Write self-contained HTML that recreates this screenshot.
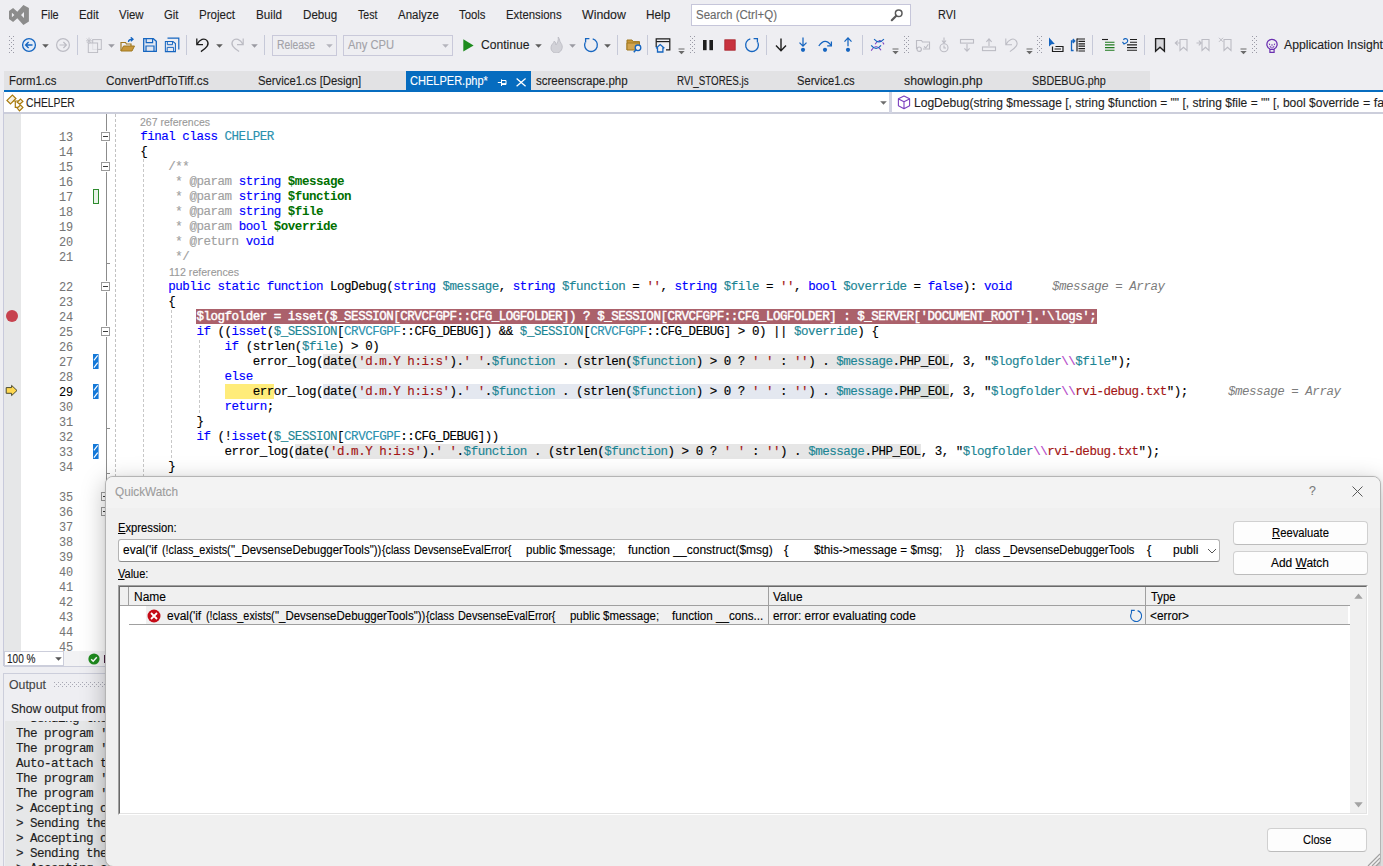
<!DOCTYPE html>
<html><head><meta charset="utf-8"><title>RVI</title>
<style>
html,body{margin:0;padding:0}
body{width:1383px;height:866px;overflow:hidden;background:#eeeef2;position:relative;font-family:"Liberation Sans",sans-serif;font-size:12px;color:#1e1e1e}
div,svg{position:absolute;box-sizing:border-box}
.t{white-space:pre;font-family:"Liberation Sans",sans-serif;transform-origin:0 50%;-webkit-text-stroke:0.12px}
.m{white-space:pre;font-family:"Liberation Mono",monospace;font-size:12.5px;letter-spacing:-0.471px;line-height:15px;height:15px;color:#000;-webkit-text-stroke:0.15px;margin-top:1px}
.o{white-space:pre;font-family:"Liberation Mono",monospace;font-size:12.6px;letter-spacing:-0.56px;line-height:15px;height:15px;color:#1e1e1e;-webkit-text-stroke:0.15px}
.k{color:#0000ff}.c{color:#2b91af}.v{color:#1b8594}.s{color:#a31515}.g{color:#a0a0a0}.dv{color:#007000;font-weight:bold;-webkit-text-stroke:0}.e{color:#b545c8}
.hl{background:#e6e6e6}.hb{background:#e4e8f0}.hp{background:#d9dfdc}
.ln{white-space:pre;font-family:"Liberation Mono",monospace;font-size:11.9px;letter-spacing:-0.11px;line-height:15px;height:15px;color:#787878;width:28px;text-align:right;-webkit-text-stroke:0.05px;margin-top:2px}
</style></head><body>

<svg style="left:9px;top:5px;" width="20" height="20" viewBox="0 0 20 20"><path d="M14.4 0 L19.9 3.1 V16.6 L14.4 19.9 L8.3 13.2 L4.1 16.9 L0 14 V5.9 L4.1 3.1 L8.3 6.8 Z M12 9.95 L15 7.1 V12.9 Z M2.9 7.7 V12.2 L5.4 9.95 Z" fill="#8c8c8c" fill-rule="evenodd"/></svg>
<div class="t" style="left:40.8px;top:6.54px;font-size:12.3px;line-height:16px;color:#1e1e1e;transform:scaleX(0.8930);">File</div>
<div class="t" style="left:78.8px;top:6.54px;font-size:12.3px;line-height:16px;color:#1e1e1e;transform:scaleX(0.9294);">Edit</div>
<div class="t" style="left:118.9px;top:6.54px;font-size:12.3px;line-height:16px;color:#1e1e1e;transform:scaleX(0.9304);">View</div>
<div class="t" style="left:163.9px;top:6.54px;font-size:12.3px;line-height:16px;color:#1e1e1e;transform:scaleX(0.9162);">Git</div>
<div class="t" style="left:199.1px;top:6.54px;font-size:12.3px;line-height:16px;color:#1e1e1e;transform:scaleX(0.9430);">Project</div>
<div class="t" style="left:256.0px;top:6.54px;font-size:12.3px;line-height:16px;color:#1e1e1e;transform:scaleX(0.9506);">Build</div>
<div class="t" style="left:302.9px;top:6.54px;font-size:12.3px;line-height:16px;color:#1e1e1e;transform:scaleX(0.9435);">Debug</div>
<div class="t" style="left:358.1px;top:6.54px;font-size:12.3px;line-height:16px;color:#1e1e1e;transform:scaleX(0.8600);">Test</div>
<div class="t" style="left:397.8px;top:6.54px;font-size:12.3px;line-height:16px;color:#1e1e1e;transform:scaleX(0.9324);">Analyze</div>
<div class="t" style="left:459.0px;top:6.54px;font-size:12.3px;line-height:16px;color:#1e1e1e;transform:scaleX(0.9229);">Tools</div>
<div class="t" style="left:505.9px;top:6.54px;font-size:12.3px;line-height:16px;color:#1e1e1e;transform:scaleX(0.9241);">Extensions</div>
<div class="t" style="left:581.8px;top:6.54px;font-size:12.3px;line-height:16px;color:#1e1e1e;transform:scaleX(1.0035);">Window</div>
<div class="t" style="left:646.0px;top:6.54px;font-size:12.3px;line-height:16px;color:#1e1e1e;transform:scaleX(0.9606);">Help</div>
<div style="left:691px;top:4px;width:220px;height:22px;background:#fff;border:1px solid #c6c6da;"></div>
<div class="t" style="left:696.3px;top:6.54px;font-size:12.3px;line-height:16px;color:#6a6a6a;transform:scaleX(0.9368);">Search (Ctrl+Q)</div>
<svg style="left:890px;top:8px;" width="14" height="14" viewBox="0 0 14 14"><circle cx="8.7" cy="5.3" r="3.3" fill="none" stroke="#5a5a5a" stroke-width="1.5"/><path d="M6.3 7.7 L1.8 12.2" stroke="#5a5a5a" stroke-width="2.2" stroke-linecap="round"/></svg>
<div class="t" style="left:937.5px;top:6.54px;font-size:12.3px;line-height:16px;color:#1e1e1e;transform:scaleX(0.8875);">RVI</div>
<svg style="left:9px;top:36px" width="5" height="18"><defs><pattern id="gp9" width="4" height="4" patternUnits="userSpaceOnUse"><rect x="0" y="0" width="1" height="1" fill="#9a9aa6"/><rect x="2" y="2" width="1" height="1" fill="#9a9aa6"/></pattern></defs><rect width="5" height="18" fill="url(#gp9)"/></svg>
<svg style="left:20.6px;top:36.7px;" width="16" height="16" viewBox="0 0 16 16"><circle cx="8" cy="8" r="6.4" fill="#e2ebf7" stroke="#1565c0" stroke-width="1.3"/><path d="M11.5 8 H4.8 M7.6 5 L4.6 8 L7.6 11" fill="none" stroke="#1565c0" stroke-width="1.3"/></svg>
<svg style="left:42.0px;top:43.5px;" width="7" height="4" viewBox="0 0 7 4"><path d="M0.2 0.2 H6.8 L3.5 3.8 Z" fill="#5c5c5c"/></svg>
<svg style="left:54.5px;top:36.7px;" width="16" height="16" viewBox="0 0 16 16"><circle cx="8" cy="8" r="6.4" fill="none" stroke="#bcbcc4" stroke-width="1.2"/><path d="M4.5 8 H11.2 M8.4 5 L11.4 8 L8.4 11" fill="none" stroke="#bcbcc4" stroke-width="1.2"/></svg>
<div style="left:77.1px;top:35.3px;width:1px;height:19.4px;background:#c6c9d8;"></div>
<svg style="left:86.3px;top:36.7px;" width="16" height="16" viewBox="0 0 16 16"><rect x="6.7" y="2.6" width="8.6" height="9.8" fill="none" stroke="#bcbcc4"/><rect x="2.3" y="6" width="9.3" height="9.6" fill="#eeeef2" fill-opacity="0.7" stroke="#bcbcc4"/><path d="M3 0.6 V7 M-0.2 3.8 H6.2 M0.8 1.6 L5.2 6 M5.2 1.6 L0.8 6" stroke="#bcbcc4" stroke-width="0.8"/></svg>
<svg style="left:107.5px;top:43.5px;" width="7" height="4" viewBox="0 0 7 4"><path d="M0.2 0.2 H6.8 L3.5 3.8 Z" fill="#9a9aa2"/></svg>
<svg style="left:120.30000000000001px;top:36.7px;" width="16" height="16" viewBox="0 0 16 16"><path d="M1 14 V5.5 H5.5 L6.5 7 H11 V9" fill="none" stroke="#a07820" stroke-width="1.2"/><path d="M1 14 L3.5 9 H14.5 L12 14 Z" fill="#c8973a" stroke="#a07820" stroke-width="1"/><path d="M8.5 5 C8.5 3 10 2.2 12.5 2.2 M10.8 0.3 L13 2.2 L10.8 4.2" fill="none" stroke="#1565c0" stroke-width="1.3"/></svg>
<svg style="left:142.0px;top:36.7px;" width="16" height="16" viewBox="0 0 16 16"><path d="M1.7 1.7 H11.3 L14.3 4.2 V14.3 H1.7 Z" fill="#e3e8f2" stroke="#1565c0" stroke-width="1.3"/><path d="M4.2 1.7 V5.6 H10.6 V1.7" fill="none" stroke="#1565c0" stroke-width="1.2"/><path d="M4 14.3 V9 H12 V14.3" fill="none" stroke="#1565c0" stroke-width="1.2"/></svg>
<svg style="left:164.0px;top:36.7px;" width="16" height="16" viewBox="0 0 16 16"><path d="M3.5 1.2 H14.8 V12.5" fill="none" stroke="#1565c0" stroke-width="1.2"/><g transform="translate(0,3.2) scale(0.8)"><path d="M1.7 1.7 H11.3 L14.3 4.2 V14.3 H1.7 Z" fill="#e3e8f2" stroke="#1565c0" stroke-width="1.3"/><path d="M4.2 1.7 V5.6 H10.6 V1.7" fill="none" stroke="#1565c0" stroke-width="1.2"/><path d="M4 14.3 V9 H12 V14.3" fill="none" stroke="#1565c0" stroke-width="1.2"/></g></svg>
<div style="left:186.1px;top:35.3px;width:1px;height:19.4px;background:#c6c9d8;"></div>
<svg style="left:194.0px;top:36.7px;" width="16" height="16" viewBox="0 0 16 16"><path d="M2.8 1.5 V7.7 H9 M3 7.5 C5.5 2.2 10.5 0.6 13 3.6 C16 7.4 12.5 11 6.9 14.6" fill="none" stroke="#1e1e1e" stroke-width="1.3"/></svg>
<svg style="left:216.2px;top:43.5px;" width="7" height="4" viewBox="0 0 7 4"><path d="M0.2 0.2 H6.8 L3.5 3.8 Z" fill="#5c5c5c"/></svg>
<svg style="left:229.5px;top:36.7px;" width="16" height="16" viewBox="0 0 16 16"><g transform="translate(16,0) scale(-1,1)"><path d="M2.8 1.5 V7.7 H9 M3 7.5 C5.5 2.2 10.5 0.6 13 3.6 C16 7.4 12.5 11 6.9 14.6" fill="none" stroke="#bcbcc4" stroke-width="1.2"/></g></svg>
<svg style="left:250.9px;top:43.5px;" width="7" height="4" viewBox="0 0 7 4"><path d="M0.2 0.2 H6.8 L3.5 3.8 Z" fill="#9a9aa2"/></svg>
<div style="left:264.1px;top:35.3px;width:1px;height:19.4px;background:#c6c9d8;"></div>
<div style="left:272px;top:34.5px;width:65px;height:21px;background:#eeeef2;border:1px solid #c9c9da;"></div>
<div class="t" style="left:276.7px;top:36.74px;font-size:12.3px;line-height:16px;color:#a2a2a8;transform:scaleX(0.8420);">Release</div>
<svg style="left:326.1px;top:43.5px;" width="7" height="4" viewBox="0 0 7 4"><path d="M0.2 0.2 H6.8 L3.5 3.8 Z" fill="#b4b4bc"/></svg>
<div style="left:343px;top:34.5px;width:110px;height:21px;background:#eeeef2;border:1px solid #c9c9da;"></div>
<div class="t" style="left:347.6px;top:36.74px;font-size:12.3px;line-height:16px;color:#a2a2a8;transform:scaleX(0.9094);">Any CPU</div>
<svg style="left:442.3px;top:43.5px;" width="7" height="4" viewBox="0 0 7 4"><path d="M0.2 0.2 H6.8 L3.5 3.8 Z" fill="#b4b4bc"/></svg>
<svg style="left:463px;top:38.5px;" width="11" height="13" viewBox="0 0 11 13"><path d="M0.3 0.3 L10.6 6.4 L0.3 12.6 Z" fill="#1e8c1e"/></svg>
<div class="t" style="left:480.5px;top:36.74px;font-size:12.3px;line-height:16px;color:#1e1e1e;transform:scaleX(0.9850);">Continue</div>
<svg style="left:534.7px;top:43.5px;" width="7" height="4" viewBox="0 0 7 4"><path d="M0.2 0.2 H6.8 L3.5 3.8 Z" fill="#5c5c5c"/></svg>
<svg style="left:549.0px;top:36.7px;" width="16" height="16" viewBox="0 0 16 16"><path transform="translate(-1.2,-1.2) scale(1.15)" d="M9 0.8 C10.5 3 10 4.5 11.5 6.5 C13.5 9 12.8 13.5 8.5 15 C4.5 15.5 2 12.5 3 9 C3.6 7 5.2 6.5 5.6 4.6 C7 5.6 7 7 7 8 C8.6 6.2 9.6 3.6 9 0.8 Z" fill="#d2d2d8" stroke="#bcbcc4" stroke-width="0.8"/></svg>
<svg style="left:569.4px;top:43.5px;" width="7" height="4" viewBox="0 0 7 4"><path d="M0.2 0.2 H6.8 L3.5 3.8 Z" fill="#9a9aa2"/></svg>
<svg style="left:582.6px;top:36.7px;" width="16" height="16" viewBox="0 0 16 16"><g transform="translate(16,0) scale(-1,1)"><path d="M6.3 1.9 A6.4 6.4 0 1 0 13.9 5.6" fill="none" stroke="#1565c0" stroke-width="1.3"/><path d="M9.6 1.6 H13.4 V5.6" fill="none" stroke="#1565c0" stroke-width="1.3"/></g></svg>
<svg style="left:604.3px;top:43.5px;" width="7" height="4" viewBox="0 0 7 4"><path d="M0.2 0.2 H6.8 L3.5 3.8 Z" fill="#5c5c5c"/></svg>
<div style="left:617.3000000000001px;top:35.3px;width:1px;height:19.4px;background:#c6c9d8;"></div>
<svg style="left:625.6px;top:36.7px;" width="16" height="16" viewBox="0 0 16 16"><path d="M1 13 V3 H6 L7.2 4.6 H13.5 V8" fill="#c8973a" stroke="#a07820" stroke-width="1"/><path d="M1 13 V6 H13.5 V13 Z" fill="#d3a550" stroke="#a07820" stroke-width="1"/><circle cx="12" cy="10.8" r="2.8" fill="#eeeef2" stroke="#1565c0" stroke-width="1.3"/><path d="M10 12.8 L7.8 15.2" stroke="#1565c0" stroke-width="1.5"/></svg>
<div style="left:647.2px;top:35.3px;width:1px;height:19.4px;background:#c6c9d8;"></div>
<svg style="left:654.8px;top:36.7px;" width="16" height="16" viewBox="0 0 16 16"><path d="M1.2 10 V1.8 H14.8 V12.8 H11" fill="none" stroke="#1e1e1e" stroke-width="1.2"/><path d="M1.2 4.6 H14.8" stroke="#1e1e1e" stroke-width="1.2"/><path d="M1 11.2 L5.2 7.6 L9.4 11.2 M2.5 10.5 V15 H7.9 V10.5" fill="none" stroke="#1565c0" stroke-width="1.3"/></svg>
<svg style="left:677.5px;top:47.5px;" width="7" height="7" viewBox="0 0 7 7"><path d="M0.5 1 H6.5" stroke="#6a6a6a" stroke-width="1"/><path d="M0.3 3 H6.7 L3.5 6.3 Z" fill="#6a6a6a"/></svg>
<svg style="left:689.5px;top:36px" width="5" height="18"><defs><pattern id="gp689" width="4" height="4" patternUnits="userSpaceOnUse"><rect x="0" y="0" width="1" height="1" fill="#9a9aa6"/><rect x="2" y="2" width="1" height="1" fill="#9a9aa6"/></pattern></defs><rect width="5" height="18" fill="url(#gp689)"/></svg>
<svg style="left:700.2px;top:36.7px;" width="16" height="16" viewBox="0 0 16 16"><rect x="3" y="3" width="3.6" height="10.2" fill="#1e1e1e"/><rect x="9.4" y="3" width="3.6" height="10.2" fill="#1e1e1e"/></svg>
<svg style="left:722.1px;top:36.7px;" width="16" height="16" viewBox="0 0 16 16"><rect x="2.8" y="2.8" width="10.4" height="10.4" fill="#c8323e" stroke="#a8222c" stroke-width="0.8"/></svg>
<svg style="left:744.0px;top:36.7px;" width="16" height="16" viewBox="0 0 16 16"><path d="M6.3 1.9 A6.4 6.4 0 1 0 13.9 5.6" fill="none" stroke="#1565c0" stroke-width="1.3"/><path d="M9.6 1.6 H13.4 V5.6" fill="none" stroke="#1565c0" stroke-width="1.3"/></svg>
<div style="left:766.3000000000001px;top:35.3px;width:1px;height:19.4px;background:#c6c9d8;"></div>
<svg style="left:773.0px;top:36.7px;" width="16" height="16" viewBox="0 0 16 16"><path d="M8 1.5 V13.5 M3 8.6 L8 13.8 L13 8.6" fill="none" stroke="#1e1e1e" stroke-width="1.4"/></svg>
<svg style="left:795.4px;top:36.7px;" width="16" height="16" viewBox="0 0 16 16"><path d="M8 0.5 V8.8 M4.5 5.6 L8 9.2 L11.5 5.6" fill="none" stroke="#1565c0" stroke-width="1.25"/><circle cx="8" cy="12.8" r="2.1" fill="#1565c0"/></svg>
<svg style="left:817.4px;top:36.7px;" width="16" height="16" viewBox="0 0 16 16"><path d="M1.8 9 Q8 0 14.2 8.4" fill="none" stroke="#1565c0" stroke-width="1.25"/><path d="M14.4 4.5 V8.8 H10.2" fill="none" stroke="#1565c0" stroke-width="1.25"/><circle cx="8" cy="12.8" r="2.1" fill="#1565c0"/></svg>
<svg style="left:839.5px;top:36.7px;" width="16" height="16" viewBox="0 0 16 16"><path d="M8 9.2 V1.2 M4.5 4.6 L8 0.9 L11.5 4.6" fill="none" stroke="#1565c0" stroke-width="1.25"/><circle cx="8" cy="12.8" r="2.1" fill="#1565c0"/></svg>
<div style="left:862.3000000000001px;top:35.3px;width:1px;height:19.4px;background:#c6c9d8;"></div>
<svg style="left:868px;top:36px;" width="18" height="18" viewBox="0 0 18 18"><path d="M7.2 8.2 Q11.5 1 16 8.4 M3.2 14.6 Q8 7 13 14.2" fill="none" stroke="#7a3fc0" stroke-width="1.1" stroke-dasharray="3.2 1.6"/><path d="M6.1 3.2 Q11 8.6 15.9 3.2 M3.2 9.4 Q8 15.6 13 9.4" fill="none" stroke="#1565c0" stroke-width="1.2"/></svg>
<svg style="left:892.3px;top:47.5px;" width="7" height="7" viewBox="0 0 7 7"><path d="M0.5 1 H6.5" stroke="#6a6a6a" stroke-width="1"/><path d="M0.3 3 H6.7 L3.5 6.3 Z" fill="#6a6a6a"/></svg>
<svg style="left:904px;top:36px" width="5" height="18"><defs><pattern id="gp904" width="4" height="4" patternUnits="userSpaceOnUse"><rect x="0" y="0" width="1" height="1" fill="#9a9aa6"/><rect x="2" y="2" width="1" height="1" fill="#9a9aa6"/></pattern></defs><rect width="5" height="18" fill="url(#gp904)"/></svg>
<svg style="left:915.0px;top:36.7px;" width="16" height="16" viewBox="0 0 16 16"><path d="M1.5 12 V3.5 H6.5 L7.5 5 H14.5 V12 H8" fill="none" stroke="#bcbcc4" stroke-width="1.1"/><path d="M9 9.5 L10.8 11 L13.3 7.2" fill="none" stroke="#bcbcc4" stroke-width="1.1"/><circle cx="4.2" cy="12.2" r="2.2" fill="none" stroke="#bcbcc4" stroke-width="1.2"/></svg>
<svg style="left:936.4px;top:36.7px;" width="16" height="16" viewBox="0 0 16 16"><circle cx="8" cy="10.8" r="4" fill="none" stroke="#bcbcc4" stroke-width="1.1"/><path d="M8 0.5 V6.5 M6 3.5 L8 6 L10 3.5 M8 8.5 V11 H10" fill="none" stroke="#bcbcc4" stroke-width="1.1"/></svg>
<svg style="left:958.5px;top:36.7px;" width="16" height="16" viewBox="0 0 16 16"><rect x="1.5" y="2.5" width="13" height="3.6" fill="none" stroke="#bcbcc4" stroke-width="1.1"/><path d="M8 7 V14 M5.4 11.3 L8 14.2 L10.6 11.3" fill="none" stroke="#bcbcc4" stroke-width="1.1"/></svg>
<svg style="left:980.7px;top:36.7px;" width="16" height="16" viewBox="0 0 16 16"><rect x="1.5" y="10" width="13" height="3.6" fill="none" stroke="#bcbcc4" stroke-width="1.1"/><path d="M8 9 V2 M5.4 4.8 L8 1.8 L10.6 4.8" fill="none" stroke="#bcbcc4" stroke-width="1.1"/></svg>
<svg style="left:1003.0px;top:36.7px;" width="16" height="16" viewBox="0 0 16 16"><path d="M2.8 1.5 V7.7 H9 M3 7.5 C5.5 2.2 10.5 0.6 13 3.6 C16 7.4 12.5 11 6.9 14.6" fill="none" stroke="#bcbcc4" stroke-width="1.1"/></svg>
<svg style="left:1025.7px;top:47.5px;" width="7" height="7" viewBox="0 0 7 7"><path d="M0.5 1 H6.5" stroke="#6a6a6a" stroke-width="1"/><path d="M0.3 3 H6.7 L3.5 6.3 Z" fill="#6a6a6a"/></svg>
<svg style="left:1036.5px;top:36px" width="5" height="18"><defs><pattern id="gp1036" width="4" height="4" patternUnits="userSpaceOnUse"><rect x="0" y="0" width="1" height="1" fill="#9a9aa6"/><rect x="2" y="2" width="1" height="1" fill="#9a9aa6"/></pattern></defs><rect width="5" height="18" fill="url(#gp1036)"/></svg>
<svg style="left:1048.3px;top:36.7px;" width="16" height="16" viewBox="0 0 16 16"><path d="M1 0.5 L1 9.5 L3.6 7.2 L6.8 7 Z" fill="#1565c0"/><path d="M4.5 9.5 V14.5 H15 V9.5 H7.5" fill="none" stroke="#1e1e1e" stroke-width="1.2"/><path d="M6.5 12 H13" stroke="#1e1e1e" stroke-width="1"/></svg>
<svg style="left:1070.2px;top:36.7px;" width="16" height="16" viewBox="0 0 16 16"><path d="M3.6 13.5 H1.5 V4 H4.5 M2.8 2 L4.8 4 L2.8 6" fill="none" stroke="#1565c0" stroke-width="1.3"/><path d="M7 2 H15 M8.5 4.4 H15 M8.5 6.8 H15 M8.5 9.2 H15 M8.5 11.6 H15 M8.5 14 H15" stroke="#1e1e1e" stroke-width="1.2"/><path d="M7 1.5 V14.5" stroke="#1e1e1e" stroke-width="1.2"/></svg>
<div style="left:1092.1px;top:35.3px;width:1px;height:19.4px;background:#c6c9d8;"></div>
<svg style="left:1100.2px;top:36.7px;" width="16" height="16" viewBox="0 0 16 16"><path d="M2 2.5 H8" stroke="#1e1e1e" stroke-width="1.1"/><path d="M5 5.2 H14.5 M5 7.9 H14.5 M5 10.6 H14.5 M5 13.3 H14.5" stroke="#1e7a1e" stroke-width="1.1"/></svg>
<svg style="left:1121.7px;top:36.7px;" width="16" height="16" viewBox="0 0 16 16"><path d="M2 6.5 C5.5 6.5 6.5 4 5 2.2 C3.8 1 2 1.6 1.5 3 M0.5 4.8 L2 7 L4.5 5.8" fill="none" stroke="#1565c0" stroke-width="1.2"/><path d="M8 2.5 H15 M8 5.2 H15 M5 7.9 H15 M5 10.6 H15 M5 13.3 H15" stroke="#1e1e1e" stroke-width="1.1"/></svg>
<div style="left:1144.0px;top:35.3px;width:1px;height:19.4px;background:#c6c9d8;"></div>
<svg style="left:1152.0px;top:36.7px;" width="16" height="16" viewBox="0 0 16 16"><path d="M3.6 1.6 H12.4 V14.2 L8 10.2 L3.6 14.2 Z" fill="#d6d6da" stroke="#1e1e1e" stroke-width="1.4"/></svg>
<svg style="left:1174.4px;top:36.7px;" width="16" height="16" viewBox="0 0 16 16"><path d="M6 2.5 H13 V13.5 L9.5 10.3 L6 13.5 Z" fill="none" stroke="#bcbcc4" stroke-width="1.1"/><path d="M6 6 H1.5 M3.8 3.6 L1.3 6 L3.8 8.4" fill="none" stroke="#bcbcc4" stroke-width="1.1"/></svg>
<svg style="left:1195.9px;top:36.7px;" width="16" height="16" viewBox="0 0 16 16"><path d="M6 2.5 H13 V13.5 L9.5 10.3 L6 13.5 Z" fill="none" stroke="#bcbcc4" stroke-width="1.1"/><path d="M0.5 6 H5 M2.8 3.6 L5.3 6 L2.8 8.4" fill="none" stroke="#bcbcc4" stroke-width="1.1"/></svg>
<svg style="left:1217.9px;top:36.7px;" width="16" height="16" viewBox="0 0 16 16"><path d="M6 2.5 H13 V13.5 L9.5 10.3 L6 13.5 Z" fill="none" stroke="#bcbcc4" stroke-width="1.1"/><path d="M1 0.8 L5 4.8 M5 0.8 L1 4.8" fill="none" stroke="#bcbcc4" stroke-width="1"/></svg>
<svg style="left:1240.4px;top:47.5px;" width="7" height="7" viewBox="0 0 7 7"><path d="M0.5 1 H6.5" stroke="#6a6a6a" stroke-width="1"/><path d="M0.3 3 H6.7 L3.5 6.3 Z" fill="#6a6a6a"/></svg>
<svg style="left:1251.5px;top:36px" width="5" height="18"><defs><pattern id="gp1251" width="4" height="4" patternUnits="userSpaceOnUse"><rect x="0" y="0" width="1" height="1" fill="#9a9aa6"/><rect x="2" y="2" width="1" height="1" fill="#9a9aa6"/></pattern></defs><rect width="5" height="18" fill="url(#gp1251)"/></svg>
<svg style="left:1263.7px;top:36.7px;" width="16" height="16" viewBox="0 0 16 16"><path d="M5.9 12 A5.1 5.1 0 1 1 10.1 12" fill="none" stroke="#6a2fb0" stroke-width="1.25"/><path d="M5.9 12.4 H10.1 V15.4 H5.9 Z" fill="none" stroke="#6a2fb0" stroke-width="1.2"/><path d="M8 11.4 V7 M6.6 10.6 L5.3 6.6 M9.4 10.6 L10.7 6.6" fill="none" stroke="#6a2fb0" stroke-width="1" stroke-dasharray="1.6 1"/></svg>
<div class="t" style="left:1284px;top:36.74px;font-size:12.3px;line-height:16px;color:#1e1e1e;transform:scaleX(0.9907);">Application Insights</div>
<div style="left:4px;top:71px;width:1146px;height:19px;background:#e2e2e4;"></div>
<div style="left:406px;top:71px;width:125px;height:21px;background:#066cbf;"></div>
<div style="left:4px;top:89.8px;width:1379px;height:2.4px;background:#066cbf;"></div>
<div class="t" style="left:9.1px;top:72.94px;font-size:12.3px;line-height:16px;color:#1e1e1e;transform:scaleX(0.9248);">Form1.cs</div>
<div class="t" style="left:105.8px;top:72.94px;font-size:12.3px;line-height:16px;color:#1e1e1e;transform:scaleX(0.9621);">ConvertPdfToTiff.cs</div>
<div class="t" style="left:257.7px;top:72.94px;font-size:12.3px;line-height:16px;color:#1e1e1e;transform:scaleX(0.9205);">Service1.cs [Design]</div>
<div class="t" style="left:410.3px;top:72.94px;font-size:12.3px;line-height:16px;color:#ffffff;transform:scaleX(0.8972);">CHELPER.php*</div>
<div class="t" style="left:535.5px;top:72.94px;font-size:12.3px;line-height:16px;color:#1e1e1e;transform:scaleX(0.9378);">screenscrape.php</div>
<div class="t" style="left:676.8px;top:72.94px;font-size:12.3px;line-height:16px;color:#1e1e1e;transform:scaleX(0.7986);">RVI_STORES.js</div>
<div class="t" style="left:797.2px;top:72.94px;font-size:12.3px;line-height:16px;color:#1e1e1e;transform:scaleX(0.9076);">Service1.cs</div>
<div class="t" style="left:903.5px;top:72.94px;font-size:12.3px;line-height:16px;color:#1e1e1e;transform:scaleX(0.9995);">showlogin.php</div>
<div class="t" style="left:1031.7px;top:72.94px;font-size:12.3px;line-height:16px;color:#1e1e1e;transform:scaleX(0.8764);">SBDEBUG.php</div>
<svg style="left:497px;top:77px;" width="10" height="10" viewBox="0 0 10 10"><path d="M0.8 5.5 H4.5 M4.5 2.3 V9 M4.5 3.5 H9 V7.5 H4.5 M4.5 6.6 H9" fill="none" stroke="#fff" stroke-width="1"/></svg>
<svg style="left:516px;top:77.6px;" width="10.2" height="9" viewBox="0 0 10.2 9"><path d="M0.6 0.6 L9.6 8.2 M9.6 0.6 L0.6 8.2" stroke="#fff" stroke-width="1.3"/></svg>
<div style="left:4px;top:92px;width:1379px;height:20.5px;background:#ffffff;"></div>
<div style="left:4px;top:112px;width:1379px;height:1.5px;background:#ccceDB;"></div>
<div style="left:888.6px;top:92px;width:3.6px;height:20.5px;background:#d2d4e2;"></div>
<svg style="left:4px;top:92.8px;" width="30" height="20" viewBox="0 0 30 20"><path d="M3 7.4 L8.4 2.1 L11.9 5.5 L6.5 10.9 Z" fill="#f6f0df" stroke="#a87a0c" stroke-width="1.2"/><path d="M9.2 8 H14.8 M11.3 8 V14.3 H13.9" fill="none" stroke="#a87a0c" stroke-width="1.2"/><path d="M13.2 9.2 L16.5 6.1 L18.9 8.4 L15.7 11.3 Z" fill="#f6f0df" stroke="#a87a0c" stroke-width="1.2"/><path d="M13.2 15 L16.5 12 L18.9 14.4 L15.5 17.9 Z" fill="#f6f0df" stroke="#a87a0c" stroke-width="1.2"/></svg>
<div class="t" style="left:25.5px;top:95.34px;font-size:12.3px;line-height:16px;color:#1e1e1e;transform:scaleX(0.8399);">CHELPER</div>
<svg style="left:880.3px;top:101px;" width="7" height="4" viewBox="0 0 7 4"><path d="M0.2 0.2 H6.8 L3.5 3.8 Z" fill="#6d6d6d"/></svg>
<svg style="left:897px;top:95px;" width="14" height="15" viewBox="0 0 14 15"><path d="M7 1 L12.6 3.8 V10.8 L7 13.8 L1.4 10.8 V3.8 Z M1.6 3.9 L7 6.8 L12.4 3.9 M7 6.8 V13.6" fill="none" stroke="#7b3fbf" stroke-width="1.1" stroke-linejoin="round"/></svg>
<div class="t" style="left:914.4px;top:95.34px;font-size:12.3px;line-height:16px;color:#1e1e1e;transform:scaleX(0.9786);">LogDebug(string $message [, string $function = &quot;&quot; [, string $file = &quot;&quot; [, bool $override</div>
<div class="t" style="left:1363.3px;top:95.34px;font-size:12.3px;line-height:16px;color:#1e1e1e;transform:scaleX(1.0205);">= false])</div>
<div style="left:4px;top:113.5px;width:1379px;height:537.5px;background:#ffffff;"></div>
<div style="left:4.2px;top:113.5px;width:16.8px;height:537.5px;background:#e6e7e8;"></div>
<div style="left:3.4px;top:92px;width:1.1px;height:574px;background:#c8cadb;"></div>
<div style="left:106px;top:113.5px;width:1px;height:537.5px;background:#8c8c8c;"></div>
<div style="left:115px;top:113.5px;width:1px;height:537.5px;background:repeating-linear-gradient(to bottom,#c2c2c2 0 3px,transparent 3px 5px)"></div>
<div style="left:143px;top:159px;width:1px;height:317px;background:repeating-linear-gradient(to bottom,#c8c8c8 0 3px,transparent 3px 5px)"></div>
<div style="left:171px;top:310px;width:1px;height:149px;background:repeating-linear-gradient(to bottom,#c8c8c8 0 3px,transparent 3px 5px)"></div>
<div style="left:199px;top:340px;width:1px;height:74px;background:repeating-linear-gradient(to bottom,#c8c8c8 0 3px,transparent 3px 5px)"></div>
<div class="ln" style="left:45px;top:129px;color:#757575">13</div>
<div class="ln" style="left:45px;top:144px;color:#757575">14</div>
<div class="ln" style="left:45px;top:159px;color:#757575">15</div>
<div class="ln" style="left:45px;top:174px;color:#757575">16</div>
<div class="ln" style="left:45px;top:189px;color:#757575">17</div>
<div class="ln" style="left:45px;top:204px;color:#757575">18</div>
<div class="ln" style="left:45px;top:219px;color:#757575">19</div>
<div class="ln" style="left:45px;top:234px;color:#757575">20</div>
<div class="ln" style="left:45px;top:249px;color:#757575">21</div>
<div class="ln" style="left:45px;top:279px;color:#757575">22</div>
<div class="ln" style="left:45px;top:294px;color:#757575">23</div>
<div class="ln" style="left:45px;top:309px;color:#757575">24</div>
<div class="ln" style="left:45px;top:324px;color:#757575">25</div>
<div class="ln" style="left:45px;top:339px;color:#757575">26</div>
<div class="ln" style="left:45px;top:354px;color:#757575">27</div>
<div class="ln" style="left:45px;top:369px;color:#757575">28</div>
<div class="ln" style="left:45px;top:384px;color:#000">29</div>
<div class="ln" style="left:45px;top:399px;color:#757575">30</div>
<div class="ln" style="left:45px;top:414px;color:#757575">31</div>
<div class="ln" style="left:45px;top:429px;color:#757575">32</div>
<div class="ln" style="left:45px;top:444px;color:#757575">33</div>
<div class="ln" style="left:45px;top:459px;color:#757575">34</div>
<div class="ln" style="left:45px;top:489px;color:#757575">35</div>
<div class="ln" style="left:45px;top:504px;color:#757575">36</div>
<div class="ln" style="left:45px;top:519px;color:#757575">37</div>
<div class="ln" style="left:45px;top:534px;color:#757575">38</div>
<div class="ln" style="left:45px;top:549px;color:#757575">39</div>
<div class="ln" style="left:45px;top:564px;color:#757575">40</div>
<div class="ln" style="left:45px;top:579px;color:#757575">41</div>
<div class="ln" style="left:45px;top:594px;color:#757575">42</div>
<div class="ln" style="left:45px;top:609px;color:#757575">43</div>
<div class="ln" style="left:45px;top:624px;color:#757575">44</div>
<div class="ln" style="left:45px;top:639px;color:#757575">45</div>
<div style="left:101px;top:132px;width:9px;height:9px;background:#fff;border:1px solid #9a9a9a;box-shadow:0 0 0 1px #fff"></div>
<div style="left:103px;top:136px;width:5px;height:1px;background:#3c3c3c;"></div>
<div style="left:101px;top:162px;width:9px;height:9px;background:#fff;border:1px solid #9a9a9a;box-shadow:0 0 0 1px #fff"></div>
<div style="left:103px;top:166px;width:5px;height:1px;background:#3c3c3c;"></div>
<div style="left:101px;top:282px;width:9px;height:9px;background:#fff;border:1px solid #9a9a9a;box-shadow:0 0 0 1px #fff"></div>
<div style="left:103px;top:286px;width:5px;height:1px;background:#3c3c3c;"></div>
<div style="left:101px;top:327px;width:9px;height:9px;background:#fff;border:1px solid #9a9a9a;box-shadow:0 0 0 1px #fff"></div>
<div style="left:103px;top:331px;width:5px;height:1px;background:#3c3c3c;"></div>
<div style="left:101px;top:492px;width:9px;height:9px;background:#fff;border:1px solid #9a9a9a;box-shadow:0 0 0 1px #fff"></div>
<div style="left:103px;top:496px;width:5px;height:1px;background:#3c3c3c;"></div>
<div style="left:101px;top:507px;width:9px;height:9px;background:#fff;border:1px solid #9a9a9a;box-shadow:0 0 0 1px #fff"></div>
<div style="left:103px;top:511px;width:5px;height:1px;background:#3c3c3c;"></div>
<div style="left:106px;top:263px;width:4px;height:1px;background:#8c8c8c;"></div>
<div style="left:106px;top:428px;width:4px;height:1px;background:#8c8c8c;"></div>
<div style="left:106px;top:473px;width:4px;height:1px;background:#8c8c8c;"></div>
<div style="left:93px;top:189px;width:6px;height:15px;background:#e9f3e9;border:1px solid #2e8b2e;"></div>
<svg style="left:93.2px;top:354px;" width="5.6" height="15" viewBox="0 0 5.6 15"><rect width="5.6" height="15" fill="#1478d8"/><path d="M0.9 6.4 L4.7 1.4 M0.9 13.6 L4.7 8.6" stroke="#fff" stroke-width="1.15"/></svg>
<svg style="left:93.2px;top:384px;" width="5.6" height="15" viewBox="0 0 5.6 15"><rect width="5.6" height="15" fill="#1478d8"/><path d="M0.9 6.4 L4.7 1.4 M0.9 13.6 L4.7 8.6" stroke="#fff" stroke-width="1.15"/></svg>
<svg style="left:93.2px;top:444px;" width="5.6" height="15" viewBox="0 0 5.6 15"><rect width="5.6" height="15" fill="#1478d8"/><path d="M0.9 6.4 L4.7 1.4 M0.9 13.6 L4.7 8.6" stroke="#fff" stroke-width="1.15"/></svg>
<div style="left:6px;top:310px;width:12px;height:12px;background:#c7424e;border-radius:50%;"></div>
<svg style="left:5px;top:384px;" width="13" height="13" viewBox="0 0 13 13"><path d="M1.2 3.6 H6.6 V1.4 L12 6.5 L6.6 11.6 V9.3 H1.2 Z" fill="#ffd850" stroke="#4a4a30" stroke-width="1"/></svg>
<div class="t" style="left:140.3px;top:113.63px;font-size:10.6px;line-height:16px;color:#9a9a9a;transform:scaleX(0.9899);">267 references</div>
<div class="t" style="left:168.5px;top:263.63px;font-size:10.6px;line-height:16px;color:#9a9a9a;transform:scaleX(1.0010);">112 references</div>
<div class="m" style="left:140.2px;top:129px;"><span class="k">final class</span> <span class="c">CHELPER</span></div>
<div class="m" style="left:140.2px;top:144px;">{</div>
<div class="m" style="left:168.32px;top:159px;"><span class="g">/**</span></div>
<div class="m" style="left:175.35px;top:174px;"><span class="g">* @param </span><span class="k">string</span> <span class="dv">$message</span></div>
<div class="m" style="left:175.35px;top:189px;"><span class="g">* @param </span><span class="k">string</span> <span class="dv">$function</span></div>
<div class="m" style="left:175.35px;top:204px;"><span class="g">* @param </span><span class="k">string</span> <span class="dv">$file</span></div>
<div class="m" style="left:175.35px;top:219px;"><span class="g">* @param </span><span class="k">bool</span> <span class="dv">$override</span></div>
<div class="m" style="left:175.35px;top:234px;"><span class="g">* @return </span><span class="k">void</span></div>
<div class="m" style="left:175.35px;top:249px;"><span class="g">*/</span></div>
<div class="m" style="left:168.32px;top:279px;"><span class="k">public static function</span> LogDebug(<span class="k">string</span> <span class="v">$message</span>, <span class="k">string</span> <span class="v">$function</span> = <span class="s">&#x27;&#x27;</span>, <span class="k">string</span> <span class="v">$file</span> = <span class="s">&#x27;&#x27;</span>, <span class="k">bool</span> <span class="v">$override</span> = <span class="k">false</span>): <span class="k">void</span></div>
<div class="m" style="left:1052px;top:279px;color:#7c7c7c;font-style:italic;-webkit-text-stroke:0;">$message = Array</div>
<div class="m" style="left:168.32px;top:294px;">{</div>
<div style="left:195.84px;top:308.8px;width:901.44px;height:14.9px;background:#ab616b;"></div>
<div class="m" style="left:196.44px;top:309px;color:#fff;-webkit-text-stroke:0.45px;">$logfolder = isset($_SESSION[CRVCFGPF::CFG_LOGFOLDER]) ? $_SESSION[CRVCFGPF::CFG_LOGFOLDER] : $_SERVER[&#x27;DOCUMENT_ROOT&#x27;].&#x27;\logs&#x27;;</div>
<div class="m" style="left:196.44px;top:324px;"><span class="k">if</span> ((<span class="k">isset</span>(<span class="v">$_SESSION</span>[<span class="c">CRVCFGPF</span>::CFG_DEBUG]) &amp;&amp; <span class="v">$_SESSION</span>[<span class="c">CRVCFGPF</span>::CFG_DEBUG] &gt; 0) || <span class="v">$override</span>) {</div>
<div class="m" style="left:224.56px;top:339px;"><span class="k">if</span> (strlen(<span class="v">$file</span>) &gt; 0)</div>
<div style="left:322.98px;top:354px;width:576.46px;height:15px;background:#e6e6e6;"></div>
<div style="left:899.44px;top:354px;width:49.210000000000036px;height:15px;background:#e6e6e6;"></div>
<div class="m" style="left:252.68px;top:354px;">error_log(date(<span class="s">&#x27;d.m.Y h:i:s&#x27;</span>).<span class="s">&#x27; &#x27;</span>.<span class="v">$function</span> . (strlen(<span class="v">$function</span>) &gt; 0 ? <span class="s">&#x27; &#x27;</span> : <span class="s">&#x27;&#x27;</span>) . <span class="v">$message</span>.PHP_EOL, 3, "<span class="v">$logfolder</span><span class="e">\\</span><span class="v">$file</span>");</div>
<div class="m" style="left:224.56px;top:369px;"><span class="k">else</span></div>
<div style="left:224.5px;top:384px;width:49px;height:15px;background:#ffec7a;"></div>
<div style="left:322.98px;top:384px;width:576.46px;height:15px;background:#e4e8f0;"></div>
<div style="left:899.44px;top:384px;width:49.210000000000036px;height:15px;background:#d9dfdc;"></div>
<div class="m" style="left:252.68px;top:384px;">error_log(date(<span class="s">&#x27;d.m.Y h:i:s&#x27;</span>).<span class="s">&#x27; &#x27;</span>.<span class="v">$function</span> . (strlen(<span class="v">$function</span>) &gt; 0 ? <span class="s">&#x27; &#x27;</span> : <span class="s">&#x27;&#x27;</span>) . <span class="v">$message</span>.PHP_EOL, 3, "<span class="v">$logfolder</span><span class="e">\\</span><span class="s">rvi-debug.txt</span>");</div>
<div class="m" style="left:1228px;top:384px;color:#7c7c7c;font-style:italic;-webkit-text-stroke:0;">$message = Array</div>
<div class="m" style="left:224.56px;top:399px;"><span class="k">return</span>;</div>
<div class="m" style="left:196.44px;top:414px;">}</div>
<div class="m" style="left:196.44px;top:429px;"><span class="k">if</span> (!<span class="k">isset</span>(<span class="v">$_SESSION</span>[<span class="c">CRVCFGPF</span>::CFG_DEBUG]))</div>
<div style="left:294.86px;top:444px;width:576.4599999999999px;height:15px;background:#e6e6e6;"></div>
<div style="left:871.3199999999999px;top:444px;width:49.210000000000036px;height:15px;background:#e6e6e6;"></div>
<div class="m" style="left:224.56px;top:444px;">error_log(date(<span class="s">&#x27;d.m.Y h:i:s&#x27;</span>).<span class="s">&#x27; &#x27;</span>.<span class="v">$function</span> . (strlen(<span class="v">$function</span>) &gt; 0 ? <span class="s">&#x27; &#x27;</span> : <span class="s">&#x27;&#x27;</span>) . <span class="v">$message</span>.PHP_EOL, 3, "<span class="v">$logfolder</span><span class="e">\\</span><span class="s">rvi-debug.txt</span>");</div>
<div class="m" style="left:168.32px;top:459px;">}</div>
<div style="left:4px;top:651px;width:1379px;height:15px;background:#f2f2f4;"></div>
<div style="left:4px;top:666px;width:1379px;height:1px;background:#ccceDB;"></div>
<div style="left:104.4px;top:655px;width:1.3px;height:7.5px;background:#4a2040;"></div>
<div style="left:4.3px;top:651.2px;width:59.7px;height:14.8px;background:#ffffff;border:1px solid #ccceDB;"></div>
<div class="t" style="left:7.2px;top:650.54px;font-size:12.3px;line-height:16px;color:#1e1e1e;transform:scaleX(0.8172);">100 %</div>
<svg style="left:54.5px;top:657px;" width="7" height="4" viewBox="0 0 7 4"><path d="M0.2 0.2 H6.8 L3.5 3.8 Z" fill="#555"/></svg>
<svg style="left:87.6px;top:652.6px;" width="12" height="12" viewBox="0 0 12 12"><circle cx="6" cy="6" r="5.6" fill="#1e8c1e"/><path d="M3.2 6.2 L5.2 8.2 L8.8 4.2" fill="none" stroke="#fff" stroke-width="1.5"/></svg>
<div style="left:3.4px;top:673px;width:1380px;height:194px;background:#eeeef2;border:1px solid #ccceDB;"></div>
<div class="t" style="left:8.6px;top:676.94px;font-size:12.3px;line-height:16px;color:#444;transform:scaleX(1.0021);">Output</div>
<svg style="left:54px;top:682px" width="60" height="5"><defs><pattern id="gpo" width="4" height="4" patternUnits="userSpaceOnUse"><rect x="0" y="0" width="1" height="1" fill="#a8a8b4"/><rect x="2" y="2" width="1" height="1" fill="#a8a8b4"/></pattern></defs><rect width="60" height="5" fill="url(#gpo)"/></svg>
<div class="t" style="left:11px;top:700.94px;font-size:12.3px;line-height:16px;color:#1e1e1e;transform:scaleX(0.9818);">Show output from:</div>
<div style="left:5px;top:721px;width:1378px;height:146px;background:#e6e7e8;"></div>
<div class="o" style="left:16px;top:711.8px">&gt; Sending the</div>
<div class="o" style="left:16px;top:726.8px">The program &#x27;[</div>
<div class="o" style="left:16px;top:741.8px">The program &#x27;[</div>
<div class="o" style="left:16px;top:756.8px">Auto-attach to</div>
<div class="o" style="left:16px;top:771.8px">The program &#x27;[</div>
<div class="o" style="left:16px;top:786.8px">The program &#x27;[</div>
<div class="o" style="left:16px;top:801.8px">&gt; Accepting co</div>
<div class="o" style="left:16px;top:816.8px">&gt; Sending the </div>
<div class="o" style="left:16px;top:831.8px">&gt; Accepting co</div>
<div class="o" style="left:16px;top:846.8px">&gt; Sending the </div>
<div class="o" style="left:16px;top:861.8px">&gt; Accepting co</div>
<div style="left:5px;top:700px;width:110px;height:21px;background:#eeeef2;"></div>
<div class="t" style="left:11px;top:700.94px;font-size:12.3px;line-height:16px;color:#1e1e1e;transform:scaleX(0.9818);">Show output from:</div>
<div style="left:104.8px;top:475.5px;width:1276.2px;height:391.5px;background:#f0f0f0;border:1px solid #b4b4b4;border-radius:8px;box-shadow:0 6px 24px rgba(0,0,0,0.27),0 0 2px rgba(0,0,0,0.10)"></div>
<div style="left:105.8px;top:476.5px;width:1274.2px;height:31px;background:#f3f3f3;border-radius:7px 7px 0 0"></div>
<div class="t" style="left:115px;top:483.94px;font-size:12.3px;line-height:16px;color:#9c9c9c;transform:scaleX(0.9568);">QuickWatch</div>
<div class="t" style="left:1309px;top:483.14px;font-size:12.3px;line-height:16px;color:#7a7a7a;">?</div>
<svg style="left:1351.5px;top:485.5px;" width="11" height="11" viewBox="0 0 11 11"><path d="M0.5 0.5 L10.5 10.5 M10.5 0.5 L0.5 10.5" stroke="#5a5a5a" stroke-width="1"/></svg>
<div class="t" style="left:118px;top:519.54px;font-size:12.3px;line-height:16px;color:#000;transform:scaleX(0.9119)"><u>E</u>xpression:</div>
<div style="left:118px;top:539px;width:1102px;height:22.6px;background:#ffffff;border:1px solid #b4b4b4;border-bottom-color:#8c8c8c;border-radius:3px;"></div>
<div class="t" style="left:123.19999999999999px;top:541.94px;font-size:12.3px;line-height:16px;color:#000;transform:scaleX(0.9727);">eval(&#x27;if</div>
<div class="t" style="left:161.6px;top:541.94px;font-size:12.3px;line-height:16px;color:#000;transform:scaleX(0.8817);">(!class_exists(</div>
<div class="t" style="left:230.7px;top:541.94px;font-size:12.3px;line-height:16px;color:#000;transform:scaleX(0.9330);">&quot;_DevsenseDebuggerTools&quot;))</div>
<div class="t" style="left:381.70000000000005px;top:541.94px;font-size:12.3px;line-height:16px;color:#000;transform:scaleX(0.8745);">{class</div>
<div class="t" style="left:414.3px;top:541.94px;font-size:12.3px;line-height:16px;color:#000;transform:scaleX(0.8858);">DevsenseEvalError{</div>
<div class="t" style="left:525.6px;top:541.94px;font-size:12.3px;line-height:16px;color:#000;transform:scaleX(0.9350);">public $message;</div>
<div class="t" style="left:627.5px;top:541.94px;font-size:12.3px;line-height:16px;color:#000;transform:scaleX(0.9760);">function __construct($msg)</div>
<div class="t" style="left:784.1px;top:541.94px;font-size:12.3px;line-height:16px;color:#000;transform:scaleX(1.0954);">{</div>
<div class="t" style="left:813.6px;top:541.94px;font-size:12.3px;line-height:16px;color:#000;transform:scaleX(0.9533);">$this-&gt;message = $msg;</div>
<div class="t" style="left:955.6px;top:541.94px;font-size:12.3px;line-height:16px;color:#000;transform:scaleX(0.9859);">}}</div>
<div class="t" style="left:975.4px;top:541.94px;font-size:12.3px;line-height:16px;color:#000;transform:scaleX(0.9077);">class _DevsenseDebuggerTools</div>
<div class="t" style="left:1146.8px;top:541.94px;font-size:12.3px;line-height:16px;color:#000;transform:scaleX(1.0467);">{</div>
<div class="t" style="left:1172.8999999999999px;top:541.94px;font-size:12.3px;line-height:16px;color:#000;transform:scaleX(0.9774);">publi</div>
<svg style="left:1206.5px;top:547.5px;" width="10" height="7" viewBox="0 0 10 7"><path d="M1 1 L5 5 L9 1" fill="none" stroke="#555" stroke-width="1"/></svg>
<div class="t" style="left:118px;top:565.54px;font-size:12.3px;line-height:16px;color:#000;transform:scaleX(0.8951)"><u>V</u>alue:</div>
<div style="left:1233px;top:521px;width:135px;height:23.5px;background:#fdfdfd;border:1px solid #d0d0d0;border-bottom-color:#bcbcbc;border-radius:4px;"></div>
<div class="t" style="left:1272.1px;top:524.64px;font-size:12.3px;line-height:16px;color:#000;transform:scaleX(0.9160)"><u>R</u>eevaluate</div>
<div style="left:1233px;top:551px;width:135px;height:23.5px;background:#fdfdfd;border:1px solid #d0d0d0;border-bottom-color:#bcbcbc;border-radius:4px;"></div>
<div class="t" style="left:1271.4px;top:555.44px;font-size:12.3px;line-height:16px;color:#000;transform:scaleX(0.9714)">Add <u>W</u>atch</div>
<div style="left:1267px;top:828px;width:100px;height:24px;background:#fdfdfd;border:1px solid #d0d0d0;border-bottom-color:#bcbcbc;border-radius:4px;"></div>
<div class="t" style="left:1302.9px;top:832.24px;font-size:12.3px;line-height:16px;color:#000;transform:scaleX(0.8999);">Close</div>
<div style="left:118px;top:585px;width:1249.5px;height:229.5px;background:#ffffff;border:1px solid #a0a0a0;border-right-color:#fff;border-bottom-color:#fff;"></div>
<div style="left:119px;top:586px;width:1247.5px;height:227.5px;background:#ffffff;border:1px solid #696969;border-right-color:#e3e3e3;border-bottom-color:#e3e3e3;"></div>
<div style="left:120px;top:587px;width:1229.5px;height:18.5px;background:#f0f0f0;"></div>
<div style="left:120px;top:605px;width:1229.5px;height:1px;background:#a0a0a0;"></div>
<div style="left:128px;top:587px;width:1px;height:18.5px;background:#a0a0a0;"></div>
<div style="left:146px;top:606px;width:1201.5px;height:18px;background:#f0f0f0;"></div>
<div style="left:129px;top:624px;width:1220.5px;height:1px;background:#a0a0a0;"></div>
<div style="left:767.5px;top:587px;width:1px;height:37.5px;background:#a0a0a0;"></div>
<div style="left:1144.5px;top:587px;width:1px;height:37.5px;background:#a0a0a0;"></div>
<div style="left:1349.5px;top:587px;width:16.5px;height:226px;background:#f0f0f0;"></div>
<svg style="left:1353.5px;top:593px;" width="9" height="6" viewBox="0 0 9 6"><path d="M0.3 5.7 L4.5 0.5 L8.7 5.7 Z" fill="#a3a3a3"/></svg>
<svg style="left:1353.5px;top:801.5px;" width="9" height="6" viewBox="0 0 9 6"><path d="M0.3 0.3 L4.5 5.5 L8.7 0.3 Z" fill="#a3a3a3"/></svg>
<div class="t" style="left:134.3px;top:588.74px;font-size:12.3px;line-height:16px;color:#000;transform:scaleX(0.9753);">Name</div>
<div class="t" style="left:772.7px;top:588.74px;font-size:12.3px;line-height:16px;color:#000;transform:scaleX(0.9657);">Value</div>
<div class="t" style="left:1151px;top:588.74px;font-size:12.3px;line-height:16px;color:#000;transform:scaleX(0.9187);">Type</div>
<svg style="left:147.4px;top:608.9px;" width="14" height="14" viewBox="0 0 14 14"><circle cx="7" cy="7" r="6.5" fill="#c50b17"/><path d="M4 4 L10 10 M10 4 L4 10" stroke="#fff" stroke-width="1.8"/></svg>
<div class="t" style="left:167.1px;top:607.74px;font-size:12.3px;line-height:16px;color:#000;transform:scaleX(0.9727);">eval(&#x27;if</div>
<div class="t" style="left:205.5px;top:607.74px;font-size:12.3px;line-height:16px;color:#000;transform:scaleX(0.8817);">(!class_exists(</div>
<div class="t" style="left:274.6px;top:607.74px;font-size:12.3px;line-height:16px;color:#000;transform:scaleX(0.9330);">&quot;_DevsenseDebuggerTools&quot;))</div>
<div class="t" style="left:425.6px;top:607.74px;font-size:12.3px;line-height:16px;color:#000;transform:scaleX(0.8745);">{class</div>
<div class="t" style="left:458.20000000000005px;top:607.74px;font-size:12.3px;line-height:16px;color:#000;transform:scaleX(0.8858);">DevsenseEvalError{</div>
<div class="t" style="left:569.8000000000001px;top:607.74px;font-size:12.3px;line-height:16px;color:#000;transform:scaleX(0.9308);">public $message;</div>
<div class="t" style="left:671.9px;top:607.74px;font-size:12.3px;line-height:16px;color:#000;transform:scaleX(0.9459);">function __cons...</div>
<div class="t" style="left:772.7px;top:607.74px;font-size:12.3px;line-height:16px;color:#000;transform:scaleX(0.9625);">error: error evaluating code</div>
<svg style="left:1129px;top:608.8px;" width="14" height="14" viewBox="0 0 14 14"><g transform="translate(14,0) scale(-0.86,0.86)"><path d="M6.3 1.9 A6.4 6.4 0 1 0 13.9 5.6" fill="none" stroke="#1565c0" stroke-width="1.3"/><path d="M9.6 1.6 H13.4 V5.6" fill="none" stroke="#1565c0" stroke-width="1.3"/></g></svg>
<div class="t" style="left:1149.5px;top:607.74px;font-size:12.3px;line-height:16px;color:#000;transform:scaleX(0.9668);">&lt;error&gt;</div>
<svg style="left:1367px;top:853px;" width="13" height="13" viewBox="0 0 13 13"><path d="M1 13 L13 1 M5 13 L13 5 M9 13 L13 9" stroke="#a0a0a0" stroke-width="1.2"/></svg>
<div style="left:1381px;top:651px;width:2px;height:215px;background:#dcdcdc;"></div>
</body></html>
